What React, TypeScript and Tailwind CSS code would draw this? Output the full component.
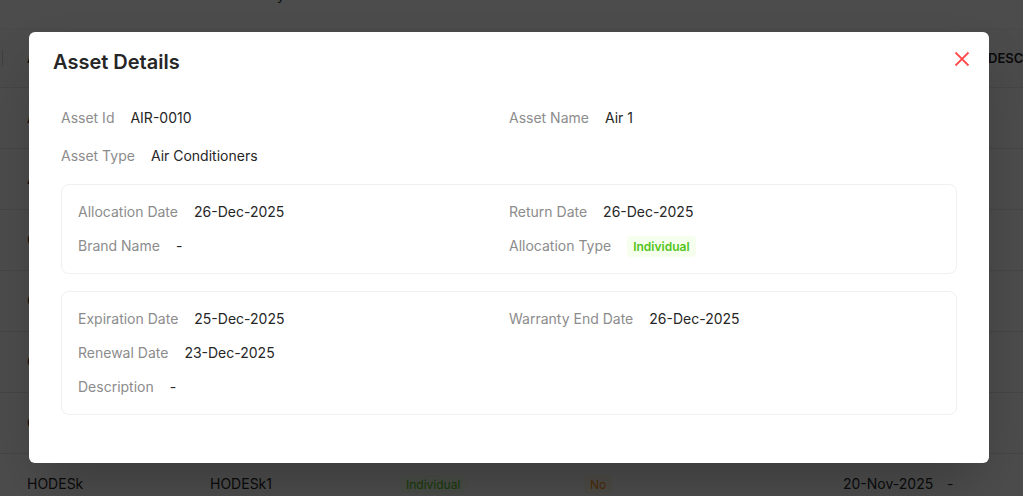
const rows = [
  { id: "AIR-0012", name: "Air 3", type: "Individual", flag: "No", date: "28-Dec-2025" },
  { id: "AIR-0011", name: "Air 2", type: "Individual", flag: "No", date: "27-Dec-2025" },
  { id: "CHR-0006", name: "Chair 6", type: "Shared", flag: "Yes", date: "22-Dec-2025" },
  { id: "CHR-0005", name: "Chair 5", type: "Individual", flag: "No", date: "18-Dec-2025" },
  { id: "CHR-0004", name: "Chair 4", type: "Individual", flag: "No", date: "02-Dec-2025" },
  { id: "CHR-0003", name: "Chair 3", type: "Shared", flag: "No", date: "25-Nov-2025" },
  { id: "HODESk", name: "HODESk1", type: "Individual", flag: "No", date: "20-Nov-2025" },
];

function Field({ label, value }: { label: string; value: React.ReactNode }) {
  return (
    <div className="flex items-center gap-4 text-sm leading-[22px]">
      <span className="text-[#8c8c8c]">{label}</span>
      <span className="text-[#262626]">{value}</span>
    </div>
  );
}

function Card({ children }: { children: React.ReactNode }) {
  return (
    <div className="grid grid-cols-2 gap-y-3 rounded-lg border border-[#f0f0f0] p-4">
      {children}
    </div>
  );
}

function BackgroundTable() {
  return (
    <div className="text-sm text-[#262626]">
      <div className="flex h-[29px] items-start overflow-hidden border-b border-gray-100">
        <p className="-mt-[15px] pl-[27px] text-sm">Assets list with allocation and warranty details</p>
      </div>
      <div className="flex h-[59px] items-center border-b border-gray-200 bg-[#fafafa] text-[13px] font-semibold uppercase">
        <div className="flex w-[210px] shrink-0 items-center">
          <span className="ml-[2px] h-4 w-px bg-gray-300" />
          <span className="ml-6">Asset Id</span>
        </div>
        <div className="w-[190px] shrink-0">Asset Name</div>
        <div className="w-[184px] shrink-0">Type</div>
        <div className="w-[259px] shrink-0">Returned</div>
        <div className="w-[104px] shrink-0">Date</div>
        <div className="w-[41px] shrink-0" />
        <div className="shrink-0 whitespace-nowrap">Description</div>
      </div>
      {rows.map((r) => (
        <div key={r.id} className="flex h-[61px] items-center border-b border-gray-200">
          <div className="w-[210px] shrink-0 pl-[27px]">{r.id}</div>
          <div className="w-[190px] shrink-0">{r.name}</div>
          <div className="w-[184px] shrink-0">
            <span className="rounded bg-[#f6ffed] px-1.5 py-0.5 text-xs text-[#52c41a]">{r.type}</span>
          </div>
          <div className="w-[259px] shrink-0">
            <span className="rounded bg-[#fff7e6] px-1.5 py-0.5 text-xs text-[#fa8c16]">{r.flag}</span>
          </div>
          <div className="w-[104px] shrink-0">{r.date}</div>
          <div className="w-[41px] shrink-0">-</div>
        </div>
      ))}
    </div>
  );
}

export default function App() {
  return (
    <div className="relative h-[496px] w-full overflow-hidden bg-white font-['Inter',sans-serif]">
      <BackgroundTable />

      <div className="absolute inset-0 bg-black/70">
        <div className="relative ml-[29px] mt-8 w-[960px] rounded-md bg-white shadow-2xl">
          <div className="px-6 pt-4">
            <h2 className="text-xl leading-7 font-semibold text-[#262626]">Asset Details</h2>
          </div>

          <button className="absolute right-[19px] top-[19px] text-[#ff4d4f]">
            <svg width="16" height="16" viewBox="0 0 16 16" fill="none" stroke="currentColor" strokeWidth="1.8">
              <path d="M1.5 1.5L14.5 14.5M14.5 1.5L1.5 14.5" />
            </svg>
          </button>

          <div className="px-8 pb-12 pt-[31px]">
            <div className="grid grid-cols-2 gap-y-4">
              <Field label="Asset Id" value="AIR-0010" />
              <Field label="Asset Name" value="Air 1" />
              <Field label="Asset Type" value="Air Conditioners" />
            </div>

            <div className="mt-[17px] flex flex-col gap-[17px]">
              <Card>
                <Field label="Allocation Date" value="26-Dec-2025" />
                <Field label="Return Date" value="26-Dec-2025" />
                <Field label="Brand Name" value="-" />
                <Field
                  label="Allocation Type"
                  value={
                    <span className="rounded bg-[#f6ffed] px-1.5 py-[3px] text-xs font-semibold text-[#52c41a]">
                      Individual
                    </span>
                  }
                />
              </Card>

              <Card>
                <Field label="Expiration Date" value="25-Dec-2025" />
                <Field label="Warranty End Date" value="26-Dec-2025" />
                <Field label="Renewal Date" value="23-Dec-2025" />
                <div />
                <Field label="Description" value="-" />
              </Card>
            </div>
          </div>
        </div>
      </div>
    </div>
  );
}
